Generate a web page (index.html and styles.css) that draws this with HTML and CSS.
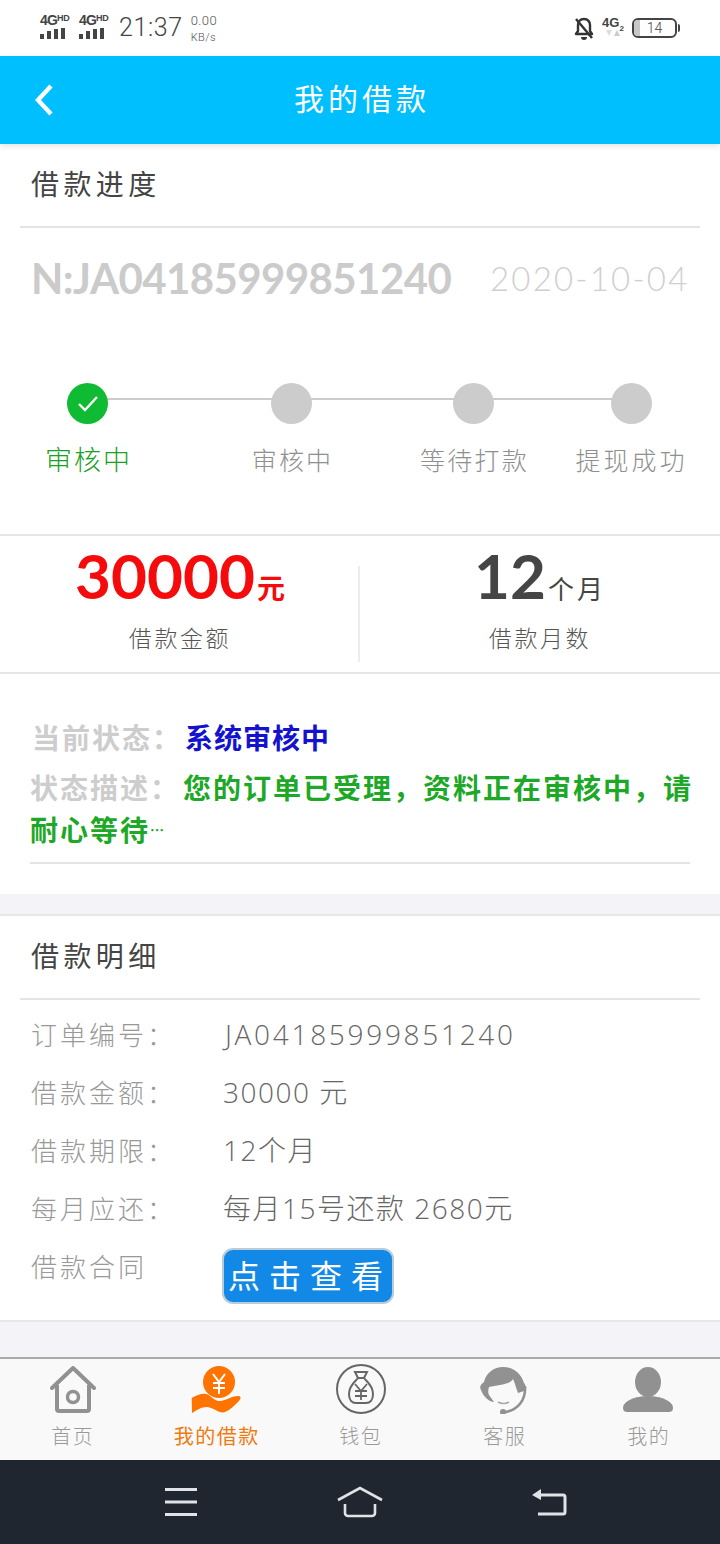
FILE: index.html
```html
<!DOCTYPE html>
<html lang="zh">
<head>
<meta charset="utf-8">
<title>我的借款</title>
<link rel="stylesheet" href="styles.css">
</head>
<body>
<div class="page">
  <div class="status">
    <div class="sig"><span class="sig-t">4G<sup>HD</sup></span><span class="bars"><i class="b1"></i><i class="b2"></i><i class="b3"></i><i class="b4"></i></span></div>
    <div class="sig"><span class="sig-t">4G<sup>HD</sup></span><span class="bars"><i class="b1"></i><i class="b2"></i><i class="b3"></i><i class="b4"></i></span></div>
    <span class="clock">21:37</span>
    <div class="speed"><span>0.00</span><span class="unit">KB/s</span></div>
    <div class="status-right">
      <svg class="bell" width="22" height="24" viewBox="0 0 22 24"><path d="M11 2c-4 0-6 3-6 6v6l-2 3h16l-2-3V8c0-3-2-6-6-6z" fill="none" stroke="#333" stroke-width="2.4" stroke-linejoin="round"/><path d="M8 20a3 3 0 0 0 6 0z" fill="#333"/><path d="M3 2l16 19" stroke="#333" stroke-width="2.4"/></svg>
      <div class="net"><span class="net-t">4G<sub>2</sub></span><svg width="14" height="6" viewBox="0 0 14 6"><path d="M0 0h6L3 6z" fill="#ddd"/><path d="M8 6h6l-3-6z" fill="#ccc"/></svg></div>
      <div class="battery"><span class="bat-fill"></span><span class="bat-num">14</span></div><span class="bat-tip"></span>
    </div>
  </div>

  <header class="top">
    <svg class="back" width="20" height="32" viewBox="0 0 20 32"><path d="M17 2L4 16l13 14" fill="none" stroke="#fff" stroke-width="4.4"/></svg>
    <h1 class="top-title">我的借款</h1>
  </header>

  <section class="progress">
    <h2 class="sec-title">借款进度</h2>
    <div class="order"><span class="order-no">N:JA04185999851240</span><span class="order-date">2020-10-04</span></div>
    <div class="steps">
      <span class="steps-line"></span>
      <div class="step"><span class="dot dot-on"><svg width="24" height="20" viewBox="0 0 24 20"><path d="M3 10l6 6L21 3" fill="none" stroke="#fff" stroke-width="2.4"/></svg></span><span class="step-t step-on">审核中</span></div>
      <div class="step"><span class="dot"></span><span class="step-t">审核中</span></div>
      <div class="step"><span class="dot"></span><span class="step-t">等待打款</span></div>
      <div class="step step-last"><span class="dot"></span><span class="step-t step-t-wide">提现成功</span></div>
    </div>
  </section>

  <section class="stats">
    <div class="stat"><div class="stat-v red"><b>30000</b><span>元</span></div><div class="stat-l">借款金额</div></div>
    <span class="stat-div"></span>
    <div class="stat"><div class="stat-v dark"><b>12</b><span>个月</span></div><div class="stat-l">借款月数</div></div>
  </section>

  <section class="state">
    <p class="state-row state-first"><span class="state-l state-gap">当前状态：</span><span class="blue">系统审核中</span></p>
    <p class="state-row"><span class="state-l state-gap">状态描述：</span><span class="green">您的订单已受理，资料正在审核中，请</span></p>
    <p class="state-row"><span class="green">耐心等待</span><span class="green ell">…</span></p>
  </section>

  <section class="detail">
    <h2 class="sec-title">借款明细</h2>
    <div class="rows">
      <div class="row"><span class="row-l">订单编号：</span><span class="row-v row-id">JA04185999851240</span></div>
      <div class="row"><span class="row-l">借款金额：</span><span class="row-v">30000 元</span></div>
      <div class="row"><span class="row-l">借款期限：</span><span class="row-v">12个月</span></div>
      <div class="row"><span class="row-l">每月应还：</span><span class="row-v">每月15号还款 2680元</span></div>
      <div class="row row-btn"><span class="row-l">借款合同</span><button class="view">点击查看</button></div>
    </div>
  </section>

  <div class="spacer"></div>

  <nav class="tabs">
    <div class="tab">
      <svg class="ico-home" width="46" height="48" viewBox="0 0 46 48"><path d="M2 22L23 2l21 20" fill="none" stroke="#919191" stroke-width="4" stroke-linejoin="round" stroke-linecap="round"/><path d="M7 19v24a2 2 0 0 0 2 2h28a2 2 0 0 0 2-2V19" fill="none" stroke="#919191" stroke-width="4"/><circle cx="23" cy="31" r="5.5" fill="none" stroke="#919191" stroke-width="3.5"/></svg>
      <span>首页</span>
    </div>
    <div class="tab tab-on">
      <svg width="54" height="48" viewBox="0 0 54 48"><circle cx="30" cy="16" r="16" fill="#ff7300"/><path d="M24 8l6 8 6-8M30 16v12M24 17h12M24 22h12" fill="none" stroke="#fff" stroke-width="2"/><path d="M2.700 32C8 29 13 27 17 28c5 1 8 7 13 7 7 0 14-6 20-5 3 1 1 4-1 6-4 4-8 8-13 10-6 2-10-4-18-5-6 0-10 3-15 6z" fill="#ff7300"/></svg>
      <span>我的借款</span>
    </div>
    <div class="tab">
      <svg class="ico-wallet" width="52" height="52" viewBox="0 0 52 52"><circle cx="26" cy="26" r="24" fill="none" stroke="#666" stroke-width="2"/><path d="M20 9h12l-3 6h-6z" fill="none" stroke="#666" stroke-width="2"/><path d="M23 15h6c2 3 9 7 9 16 0 6-3 9-7 9H21c-4 0-7-3-7-9 0-9 7-13 9-16z" fill="none" stroke="#666" stroke-width="2"/><path d="M20 21l6 7 6-7M26 28v9M20 28h12M20 33h12" fill="none" stroke="#666" stroke-width="1.800"/></svg>
      <span>钱包</span>
    </div>
    <div class="tab">
      <svg width="52" height="48" viewBox="0 0 52 48"><path d="M3 24c-2-3 0-6 3-8C8 7 16 1 25 1c10 0 18 6 21 16 2 2 2 5 0 8l-6 2c-2-5-3-10-5-14-3 6-16 6-24 8-1 3-1 6 0 8l5 7C11 36 5 30 3 24z" fill="#919191"/><path d="M47 20c1 14-7 24-20 26" fill="none" stroke="#919191" stroke-width="2.600"/><circle cx="25" cy="46" r="3" fill="#919191"/><path d="M20 36c3 2 8 2 11 0" fill="none" stroke="#aaa" stroke-width="1.600"/></svg>
      <span>客服</span>
    </div>
    <div class="tab">
      <svg width="52" height="48" viewBox="0 0 52 48"><ellipse cx="26" cy="16" rx="13" ry="15" fill="#919191"/><path d="M1 42c0-7 12-12 25-12s25 5 25 12c0 3-2 4-4 4H5c-2 0-4-1-4-4z" fill="#919191"/></svg>
      <span>我的</span>
    </div>
  </nav>

  <div class="sysbar">
    <svg width="34" height="30" viewBox="0 0 34 30"><path d="M1 2.500h32M1 15h32M1 27.500h32" stroke="#dfe2e6" stroke-width="3"/></svg>
    <svg width="48" height="32" viewBox="0 0 48 32"><path d="M2 14L24 2l22 12" fill="none" stroke="#dfe2e6" stroke-width="2.600"/><path d="M9 18v9a3 3 0 0 0 3 3h24a3 3 0 0 0 3-3v-9" fill="none" stroke="#dfe2e6" stroke-width="2.600"/></svg>
    <svg class="ico-back" width="36" height="28" viewBox="0 0 36 28"><path d="M4 7h28a2 2 0 0 1 2 2v15a2 2 0 0 1-2 2H7" fill="none" stroke="#dfe2e6" stroke-width="3"/><path d="M10 1v11L1 7z" fill="#dfe2e6"/></svg>
  </div>
</div>
</body>
</html>
```

FILE: styles.css
```css
* { box-sizing: border-box; }
html, body { margin: 0; padding: 0; }
body { background: #fff; font-family: "Noto Sans CJK SC", "Noto Sans", sans-serif; }
.page { width: 720px; height: 1544px; display: flex; flex-direction: column; overflow: hidden; background: #f4f4f8; }

.status { height: 56px; background: #fff; display: flex; align-items: flex-start; padding: 13px 40px 0; color: #333; flex: none; }
.sig { width: 31px; margin-right: 8px; display: flex; flex-direction: column; }
.sig-t { font: 700 14px/15px "Liberation Sans", sans-serif; color: #444; white-space: nowrap; letter-spacing: -0.8px; }
.sig-t sup { font-size: 9px; line-height: 0; vertical-align: 4px; letter-spacing: -0.3px; }
.bars { display: flex; align-items: flex-end; gap: 3px; height: 11px; }
.bars i { width: 4px; background: #444; display: block; }
.b1 { height: 5px; } .b2 { height: 8px; } .b3 { height: 10px; } .b4 { height: 11px; }
.clock { font: 300 25px/26px Roboto, sans-serif; color: #444; margin: 2px 0 0 1px; letter-spacing: 0.6px; }
.speed { display: flex; flex-direction: column; margin-left: 8px; font: 300 13px/16px Roboto, sans-serif; color: #555; letter-spacing: 0.4px; }
.speed .unit { font-size: 11px; line-height: 18px; }
.status-right { margin-left: auto; display: flex; align-items: flex-start; }
.bell { margin: 4px 0 0 0; }
.net { width: 26px; margin-left: 5px; display: flex; flex-direction: column; align-items: center; margin-top: 2px; }
.net-t { font: 700 13px/15px "Liberation Sans", sans-serif; color: #444; white-space: nowrap; }
.net-t sub { font-size: 8px; line-height: 0; }
.battery { width: 45px; height: 20px; margin: 5px 0 0 6px; border: 2px solid #444; border-radius: 6px; display: flex; align-items: center; overflow: hidden; }
.bat-fill { width: 6px; height: 100%; background: #c8c8c8; flex: none; }
.bat-num { font: 300 14px/16px Roboto, sans-serif; color: #444; flex: 1; text-align: center; padding-right: 6px; }
.bat-tip { width: 2px; height: 8px; background: #444; margin: 11px 0 0 1px; border-radius: 0 2px 2px 0; }

.top { height: 88px; flex: none; background: #00bfff; box-shadow: 0 2px 6px rgba(0,0,0,.12); display: flex; align-items: center; justify-content: center; position: relative; z-index: 1; }
.back { position: absolute; left: 34px; top: 28px; }
.top-title { margin: 0 -4px 0 0; padding-bottom: 6px; font-size: 30px; font-weight: 400; line-height: 40px; color: #fff; letter-spacing: 4px; }

.progress { background: #fff; height: 390px; flex: none; }
.sec-title { margin: 0 20px; height: 84px; padding-left: 11px; border-bottom: 2px solid #e4e4e4; font-size: 28px; font-weight: 400; line-height: 78px; color: #444; letter-spacing: 4.400px; }
.order { height: 100px; display: flex; align-items: center; padding-left: 31px; white-space: nowrap; }
.order-no { font: 700 42px/44px Lato, sans-serif; color: #cbcbcb; width: 459px; letter-spacing: -0.6px; }
.order-date { font: 300 33px/44px Lato, sans-serif; color: #cfcfcf; letter-spacing: 2.200px; }

.steps { display: grid; grid-template-columns: 175px 233px 131px 181px; padding-top: 55px; position: relative; }
.steps-line { position: absolute; left: 88px; width: 544px; top: 70px; height: 2px; background: #ccc; }
.step { display: flex; flex-direction: column; align-items: center; position: relative; }
.step-last { padding-left: 4px; }
.dot { width: 41px; height: 41px; border-radius: 50%; background: #ccc; display: flex; align-items: center; justify-content: center; }
.dot-on { background: #0fbb32; }
.step-t { margin: 16px -2px 0 0; line-height: 38px; font-size: 25px; font-weight: 300; letter-spacing: 2.200px; color: #8f8f8f; white-space: nowrap; }
.step-t-wide { letter-spacing: 3px; margin-right: 0; }
.step-on { font-size: 27px; color: #1b9f24; letter-spacing: 2px; }

.stats { height: 140px; flex: none; background: #fff; display: flex; border-top: 2px solid #e6e6e6; border-bottom: 2px solid #e6e6e6; }
.stat { flex: 1; display: flex; flex-direction: column; align-items: center; padding-top: 8px; }
.stat-v { height: 62px; display: flex; align-items: baseline; white-space: nowrap; }
.stat-v b { font: 700 62px/62px Lato, sans-serif; }
.stat-v span { font-size: 26px; margin-left: 2px; line-height: 40px; }
.red { color: #f60b0d; }
.red span { font-size: 28px; font-weight: 700; }
.dark { color: #454545; }
.dark span { letter-spacing: 3px; font-weight: 400; }
.stat-l { margin-top: 13px; font-size: 23px; line-height: 36px; color: #555; letter-spacing: 2.600px; font-weight: 300; }
.stat-div { width: 2px; margin: 30px 0 10px -2px; background: #ececec; flex: none; }

.state { background: #fff; height: 220px; flex: none; padding: 42px 30px 0; }
.state-row { margin: 0; font-size: 28px; font-weight: 700; line-height: 42px; letter-spacing: 2px; white-space: nowrap; }
.state-first { padding-left: 2px; margin-bottom: 8px; }
.state-l { color: #cdcdcd; }
.state-gap { margin-right: 3px; }
.blue { color: #1212cf; letter-spacing: 1px; }
.green { color: #1da827; }
.ell { font-size: 14px; vertical-align: 6px; letter-spacing: 0; }
.state::after { content: ""; display: block; height: 2px; background: #e4e4e4; margin-top: 12px; }

.detail { margin-top: 20px; flex: none; background: #fff; border-top: 2px solid #e6e6e6; border-bottom: 2px solid #e6e6e6; }
.rows { padding: 5px 0 16px 31px; }
.row { display: flex; min-height: 58px; align-items: flex-start; line-height: 58px; white-space: nowrap; }
.row-l { width: 192px; flex: none; font-size: 26px; font-weight: 300; color: #999; letter-spacing: 3px; }
.row-v { font: 300 28px/58px "Open Sans", "Noto Sans CJK SC", sans-serif; color: #666; letter-spacing: 1.500px; }
.row-id { letter-spacing: 2.700px; padding-left: 2px; }
.view { width: 172px; height: 56px; margin: 11px 0 0 -1px; padding: 0 0 4px 4px; background: #1289e6; border: 2px solid #b9cbd9; border-radius: 11px; color: #fff; font-family: inherit; font-size: 32px; line-height: 46px; letter-spacing: 9px; white-space: nowrap; text-align: left; }

.spacer { flex: 1; }

.tabs { height: 103px; flex: none; display: grid; grid-template-columns: repeat(5, 144px); background: #f9f9f9; border-top: 2px solid #aaa; padding-top: 7px; }
.tab { display: flex; flex-direction: column; align-items: center; color: #999; font-size: 20px; font-weight: 300; line-height: 30px; letter-spacing: 1.500px; }
.tab svg { flex: none; }
.tab span { margin: 7px -1.500px 0 0; }
.tab-on { color: #ef7a10; font-weight: 400; }
.ico-home { margin-left: 2px; }
.ico-wallet { margin: -3px 0 -1px 2px; }

.sysbar { height: 84px; flex: none; background: #202630; display: flex; align-items: center; padding-left: 164px; gap: 138px; }
.ico-back { margin-left: 9px; }
```
